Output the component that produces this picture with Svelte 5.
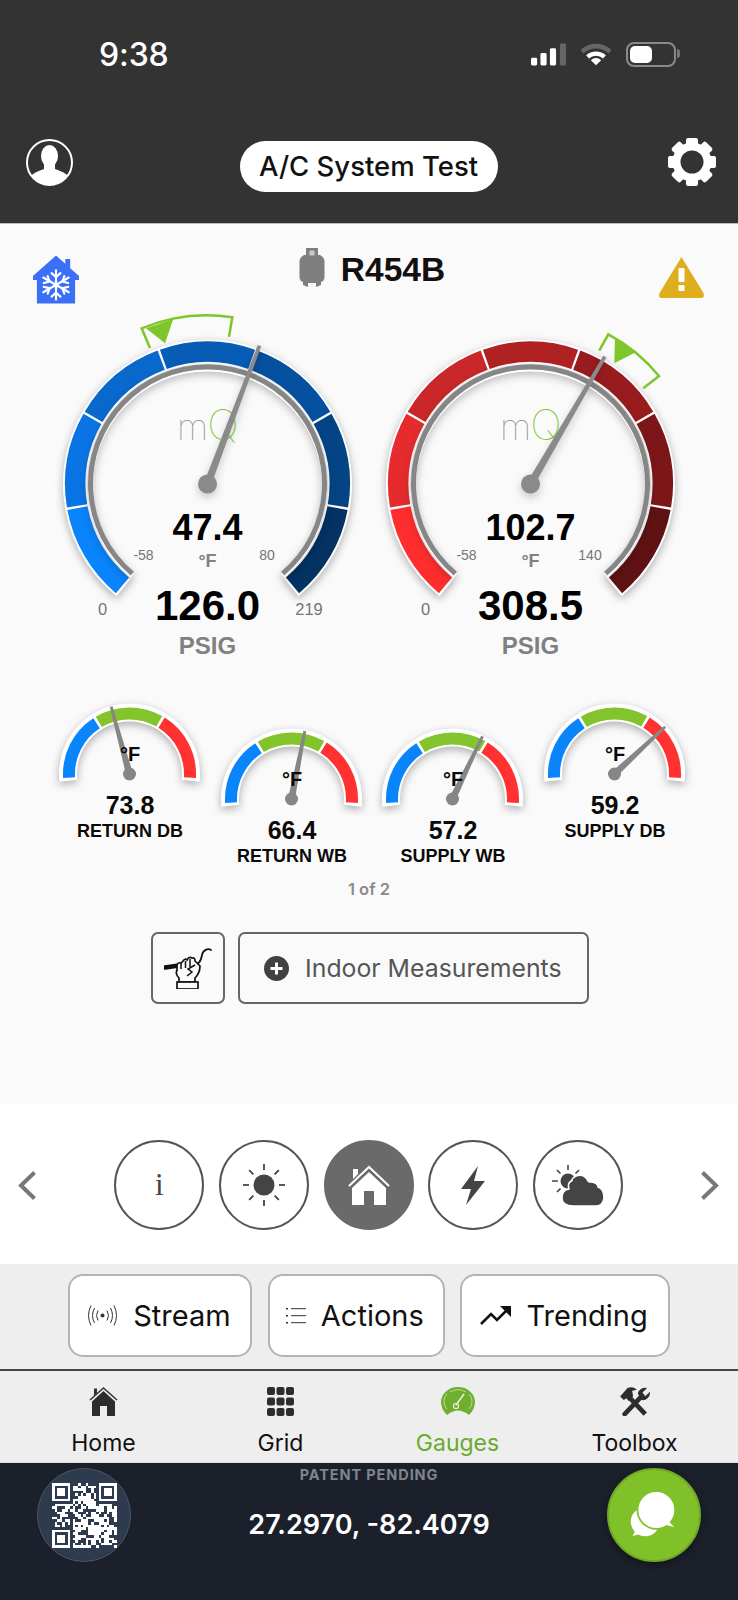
<script>
  const pt = (cx, cy, r, a) => [cx + r * Math.cos((a * Math.PI) / 180), cy - r * Math.sin((a * Math.PI) / 180)];
  const f = (n) => n.toFixed(2);
  function sector(cx, cy, r0, r1, a0, a1) {
    const [x1, y1] = pt(cx, cy, r1, a0);
    const [x2, y2] = pt(cx, cy, r1, a1);
    const [x3, y3] = pt(cx, cy, r0, a1);
    const [x4, y4] = pt(cx, cy, r0, a0);
    const large = Math.abs(a0 - a1) > 180 ? 1 : 0;
    return `M${f(x1)} ${f(y1)}A${r1} ${r1} 0 ${large} 1 ${f(x2)} ${f(y2)}L${f(x3)} ${f(y3)}A${r0} ${r0} 0 ${large} 0 ${f(x4)} ${f(y4)}Z`;
  }
  function needle(cx, cy, dx, dy, base, tip) {
    const l = Math.hypot(dx, dy);
    const nx = -dy / l;
    const ny = dx / l;
    const p = [
      [cx + nx * base, cy + ny * base],
      [cx + dx + nx * tip, cy + dy + ny * tip],
      [cx + dx - nx * tip, cy + dy - ny * tip],
      [cx - nx * base, cy - ny * base]
    ];
    return p.map((q) => q.map(f).join(',')).join(' ');
  }
  const CX = 161.5;
  const CY = 180;
  const blues = ['#0a84fb', '#0a74e4', '#0868cc', '#075cb6', '#06519f', '#054484', '#033263'];
  const reds = ['#ff2e2e', '#e52b2d', '#c92729', '#b02122', '#981c1e', '#7c1719', '#5e1213'];
  const big = [
    { colors: blues, val: '47.4', lo: '-58', hi: '80', max: '219', main: '126.0', tip: [52, -138.3],
      bracket: 'M104,44 L95.700,24.300 A169 169 0 0 1 186.300,13.300 L183,32.700', tri: '100,24.300 127.300,15 119,39.300' },
    { colors: reds, val: '102.7', lo: '-58', hi: '140', max: null, main: '308.5', tip: [74.3, -127.3],
      bracket: 'M230.300,46.700 L239.300,30.300 A167 167 0 0 1 290,72 L274.300,84.300', tri: '246,34.300 267.700,47.700 245.300,59.300' }
  ];
  const small = [
    { val: '73.8', label: 'RETURN DB', tip: [-18.3, -67.3], low: false },
    { val: '66.4', label: 'RETURN WB', tip: [13.3, -68], low: true },
    { val: '57.2', label: 'SUPPLY WB', tip: [30, -62.7], low: true },
    { val: '59.2', label: 'SUPPLY DB', tip: [50.7, -47.3], low: false }
  ];
  const SX = 81.5;
  const SY = 79;
  const gearTeeth = [0, 45, 90, 135, 180, 225, 270, 315];
  const sunRays = [0, 45, 90, 135, 180, 225, 270, 315];
  const N = 25;
  const qr = [];
  let seed = 1337;
  const rnd = () => ((seed = (seed * 1103515245 + 12345) & 0x7fffffff) >> 12) % 100;
  const inFinder = (x, y) => (x < 8 && y < 8) || (x > 16 && y < 8) || (x < 8 && y > 16);
  for (let y = 0; y < N; y++) for (let x = 0; x < N; x++) if (!inFinder(x, y) && rnd() < 55) qr.push([x, y]);
  const finders = [[0, 0], [18, 0], [0, 18]];
</script>

<div class="app">
  <header class="head">
    <div class="status">
      <span class="time">9:38</span>
      <div class="sicons">
        <svg width="35" height="23" viewBox="0 0 37 23" aria-hidden="true">
          <rect x="0" y="15" width="6.5" height="8" rx="1.5" fill="#fff" />
          <rect x="10" y="10" width="6.5" height="13" rx="1.5" fill="#fff" />
          <rect x="20" y="5" width="6.5" height="18" rx="1.5" fill="#fff" />
          <rect x="30.5" y="0" width="6.5" height="23" rx="1.5" fill="#666" />
        </svg>
        <svg width="30" height="23" viewBox="0 0 32 23" aria-hidden="true">
          <path d="M1 8.5A22 22 0 0 1 31 8.5" fill="none" stroke="#666" stroke-width="5" />
          <path d="M7 14A13.500 13.500 0 0 1 25 14" fill="none" stroke="#fff" stroke-width="4.500" />
          <path d="M16 23L10.500 17.500A8 8 0 0 1 21.500 17.500Z" fill="#fff" />
        </svg>
        <div class="batt"><span class="cell"></span><span class="nub"></span></div>
      </div>
    </div>
    <div class="titlerow">
      <svg width="47" height="47" viewBox="0 0 47 47" aria-hidden="true">
        <defs><clipPath id="avc"><circle cx="23.5" cy="23.5" r="22.500" /></clipPath></defs>
        <g clip-path="url(#avc)" fill="#fff">
          <ellipse cx="23.5" cy="17" rx="8.500" ry="11" />
          <path d="M18 25L18 30Q8 33 4 38L4 48L43 48L43 38Q39 33 29 30L29 25Z" />
        </g>
        <circle cx="23.5" cy="23.5" r="22.500" fill="none" stroke="#fff" stroke-width="2" />
      </svg>
      <div class="pill">A/C System Test</div>
      <svg width="48" height="48" viewBox="0 0 48 48" aria-hidden="true">
        {#each gearTeeth as a}
          <rect x="18" y="0" width="12" height="12" rx="2" fill="#fff" transform="rotate({a} 24 24)" />
        {/each}
        <circle cx="24" cy="24" r="15.500" fill="none" stroke="#fff" stroke-width="8" />
      </svg>
    </div>
  </header>

  <main class="content">
    <div class="toprow">
      <svg class="hv" width="46" height="49" viewBox="0 0 47 49" aria-hidden="true">
        <path d="M23.500 0L33 8.500V3.500H38V13L47 21V25H43V49H4V25H0V21Z" fill="#3b6ff5" />
        <g stroke="#fff" stroke-width="2.200" stroke-linecap="round" fill="none">
          <path d="M23.500 15V45M10.500 22.500L36.500 37.500M36.500 22.500L10.500 37.500" />
          <path d="M19 18L23.500 22L28 18M19 42L23.500 38L28 42M11 28L17 26.500L15 21M36 28L30 26.500L32 21M11 32L17 33.500L15 39M36 32L30 33.500L32 39" />
        </g>
      </svg>
      <div class="refrig">
        <svg width="26" height="39" viewBox="0 0 26 39" aria-hidden="true">
          <path d="M7 0H19V7H21Q25 9 25.500 13V30Q25 33 22 34V37L17 39V35H9V39L4 37V34Q1 33 .5 30V13Q1 9 5 7H7Z" fill="#7f7f7f" />
          <rect x="10.500" y="2.500" width="5" height="5" fill="#fafafa" opacity=".6" />
        </svg>
        <span class="rname">R454B</span>
      </div>
      <svg class="warn" width="47" height="43" viewBox="0 0 47 43" aria-hidden="true">
        <path d="M23.500 2L45.500 38Q47 43 43 43H4Q0 43 1.500 38Z" fill="#dfae1f" />
        <rect x="20.500" y="13" width="6" height="14" rx="1" fill="#fff" />
        <rect x="20.500" y="30" width="6" height="6" rx="1" fill="#fff" />
      </svg>
    </div>

    <div class="bigrow">
      {#each big as g}
        <svg class="bg" width="323" height="365" viewBox="0 0 323 365">
          <g class="shadow">
            <path d={sector(CX, CY, 120, 144.500, 231, -51)} fill="#fff" />
          </g>
          {#each g.colors as c, i}
            <path d={sector(CX, CY, 122, 142.500, 230 - 40 * i - (i ? 0.5 : 0), 230 - 40 * (i + 1) + (i < 6 ? 0.5 : 0))} fill={c} />
          {/each}
          <g class="shadow2">
            <path d={sector(CX, CY, 114.500, 119.500, 230, -50)} fill="#868686" />
          </g>
          <path d={g.bracket} fill="none" stroke="#7fc62c" stroke-width="2.500" />
          <polygon points={g.tri} fill="#7fc62c" />
          <text class="mq" x={CX - 30.500} y="136"><tspan class="m">m</tspan><tspan class="q" dx="-1">Q</tspan></text>
          <text class="num" x={CX} y="236" font-size="36">{g.val}</text>
          <text class="unit" x={CX} y="263" font-size="18">°F</text>
          <text class="tick" x={CX - 64} y="256" font-size="14">{g.lo}</text>
          <text class="tick" x={CX + 59.500} y="256" font-size="14">{g.hi}</text>
          <text class="tick" x={CX - 105} y="311" font-size="16.500">0</text>
          {#if g.max}<text class="tick" x={CX + 101.500} y="311" font-size="16.500">{g.max}</text>{/if}
          <text class="num" x={CX} y="316" font-size="42">{g.main}</text>
          <text class="unit" x={CX} y="350" font-size="24">PSIG</text>
          <g class="shadow3">
            <polygon points={needle(CX, CY, g.tip[0], g.tip[1], 3.800, 1.800)} fill="#8a8a8a" />
            <circle cx={CX} cy={CY} r="9.500" fill="#8a8a8a" />
          </g>
        </svg>
      {/each}
    </div>

    <div class="smallrow">
      {#each small as s}
        <svg class="sg" class:low={s.low} width="161.700" height="150" viewBox="0 0 161.700 150">
          <g class="shadow">
            <path d={sector(SX, SY, 52.500, 70.500, 186.400, -6.400)} fill="#fff" />
          </g>
          <path d={sector(SX, SY, 54.500, 66.500, 183.500, 123)} fill="#0a84fb" />
          <path d={sector(SX, SY, 54.500, 66.500, 120.500, 60.500)} fill="#83c42d" />
          <path d={sector(SX, SY, 54.500, 66.500, 58, -3.500)} fill="#ff3131" />
          <polygon points={needle(SX, SY, s.tip[0], s.tip[1], 3.500, 1.400)} fill="#868686" />
          <circle cx={SX} cy={SY} r="6.500" fill="#868686" />
          <text class="sf" x={SX + 0.5} y="66" font-size="20">°F</text>
          <text class="sv" x={SX + 0.5} y="119" font-size="25">{s.val}</text>
          <text class="sl" x={SX + 0.5} y="142.500" font-size="18">{s.label}</text>
        </svg>
      {/each}
    </div>

    <div class="pager">1 of 2</div>

    <div class="actions">
      <button class="sq" aria-label="Probe">
        <svg width="48" height="42" viewBox="0 0 48 42" aria-hidden="true">
          <path d="M1 20.500L15 18.500" stroke="#111" stroke-width="4.500" stroke-linecap="round" />
          <path d="M28 15C34 20 37 14 38 8C39 3 44 1 47 3" fill="none" stroke="#111" stroke-width="1.700" stroke-linecap="round" />
          <g fill="#fafafa" stroke="#111" stroke-width="1.700">
            <path d="M13 23V18Q14 15 17 16L19 14Q21 11 23 13Q25 9 28 11Q31 10 31 14L36 19Q36 26 31 31V35H15V31Q11 27 13 23Z" />
            <rect x="13" y="35" width="21" height="7" />
          </g>
          <path d="M17 16V22M21.500 14V21M26 12V20M31 18L24 22L28 25L23 29" fill="none" stroke="#111" stroke-width="1.500" />
        </svg>
      </button>
      <button class="wide">
        <svg width="25" height="25" viewBox="0 0 25 25" aria-hidden="true">
          <circle cx="12.500" cy="12.500" r="12.500" fill="#414141" />
          <path d="M12.500 6.500V18.500M6.500 12.500H18.500" stroke="#fff" stroke-width="3" />
        </svg>
        <span>Indoor Measurements</span>
      </button>
    </div>
  </main>

  <section class="tabs">
    <svg width="19" height="29" viewBox="0 0 19 29" aria-hidden="true"><path d="M16.500 1.500L3 14.500L16.500 27.500" fill="none" stroke="#777" stroke-width="4" /></svg>
    <div class="circles">
      <div class="circ"><span class="ii">i</span></div>
      <div class="circ">
        <svg width="50" height="44" viewBox="0 0 50 44" aria-hidden="true">
          <circle cx="25" cy="22" r="10.500" fill="#444" />
          {#each sunRays as a}
            <line x1="25" y1="1" x2="25" y2="7" stroke="#444" stroke-width="1.800" transform="rotate({a} 25 22)" />
          {/each}
        </svg>
      </div>
      <div class="circ on">
        <svg width="42" height="40" viewBox="0 0 42 40" aria-hidden="true">
          <path d="M1 21L21 2L41 21" fill="none" stroke="#fff" stroke-width="2" />
          <path d="M5 4H10V9L5 14Z" fill="#fff" />
          <path d="M4 23L21 7L38 23V40H26V26H16V40H4Z" fill="#fff" />
        </svg>
      </div>
      <div class="circ">
        <svg width="24" height="39" viewBox="0 0 24 39" aria-hidden="true"><path d="M17 0L0 23H10L5 39L24 15H13Z" fill="#444" /></svg>
      </div>
      <div class="circ">
        <svg width="52" height="41" viewBox="0 0 52 41" aria-hidden="true">
          <circle cx="16" cy="16" r="7.500" fill="#444" />
          <g stroke="#444" stroke-width="1.600">
            <path d="M16 0V5M0 16H6M5 5L8.500 8.500M27 5L23.500 8.500M5 27L8.500 23.500" />
          </g>
          <path d="M17 24Q15 18 20 15.500Q19 14 24 11Q32 8 36 16Q36 17 39 17Q46 18 46 22Q52 24 52 33Q51 41 43 41H21Q10 41 10 33Q10 25 17 24Z" fill="#444" stroke="#fff" stroke-width="1.500" />
        </svg>
      </div>
    </div>
    <svg width="19" height="29" viewBox="0 0 19 29" aria-hidden="true"><path d="M2.500 1.500L16 14.500L2.500 27.500" fill="none" stroke="#777" stroke-width="4" /></svg>
  </section>

  <section class="btnbar">
    <button class="b stream">
      <svg width="31" height="21" viewBox="0 0 31 21" aria-hidden="true">
        <circle cx="15.500" cy="10.500" r="2" fill="#333" />
        <g fill="none" stroke="#333" stroke-width="1">
          <path d="M11 5.500Q8 10.500 11 15.500M20 5.500Q23 10.500 20 15.500M7.500 3Q3.500 10.500 7.500 18M23.500 3Q27.500 10.500 23.500 18M4 .5Q-1 10.500 4 20.500M27 .5Q32 10.500 27 20.500" />
        </g>
      </svg>
      <span>Stream</span>
    </button>
    <button class="b actionsb">
      <svg width="20" height="18" viewBox="0 0 20 18" aria-hidden="true">
        <g fill="#333"><rect x="0" y="1" width="2" height="1.500" /><rect x="0" y="8" width="2" height="1.500" /><rect x="0" y="15" width="2" height="1.500" /></g>
        <path d="M5 1.700H20M5 8.700H20M5 15.700H20" stroke="#333" stroke-width="1" />
      </svg>
      <span>Actions</span>
    </button>
    <button class="b trendb">
      <svg width="31" height="19" viewBox="0 0 31 19" aria-hidden="true">
        <path d="M1 18L11 8L17 14L29 2" fill="none" stroke="#111" stroke-width="2.600" />
        <path d="M20 0H31V11Z" fill="#111" />
      </svg>
      <span>Trending</span>
    </button>
  </section>

  <nav class="nav">
    <div class="ni">
      <svg width="29" height="29" viewBox="0 0 29 29" aria-hidden="true">
        <path d="M1 13L14.500 1L28 13" fill="none" stroke="#333" stroke-width="1.500" />
        <path d="M5 1.500H8V6L5 9Z" fill="#333" />
        <path d="M3 14.500L14.500 4L26 14.500V29H18V19H11V29H3Z" fill="#2d2d2d" />
      </svg>
      <span>Home</span>
    </div>
    <div class="ni">
      <svg width="27" height="29" viewBox="0 0 27 29" aria-hidden="true">
        {#each [0, 10.500, 21] as y}
          {#each [0, 9.500, 19] as x}
            <rect x={x} y={y} width="8" height="8" rx="2" fill="#2d2d2d" />
          {/each}
        {/each}
      </svg>
      <span>Grid</span>
    </div>
    <div class="ni act">
      <svg width="34" height="29" viewBox="0 0 34 29" aria-hidden="true">
        <path d="M6 28Q0 22 0 15A17 15 0 0 1 34 15Q34 22 28 28Q17 19 6 28Z" fill="#6fae2e" />
        <path d="M6 22A14 12 0 0 1 6 7M28 22A14 12 0 0 0 28 7M9 5A14 13 0 0 1 25 5" fill="none" stroke="#cfe6b4" stroke-width=".8" />
        <path d="M15 18L23 7" stroke="#eaf4dd" stroke-width="1.500" />
        <circle cx="15" cy="19" r="2.500" fill="none" stroke="#eaf4dd" stroke-width="1.200" />
      </svg>
      <span>Gauges</span>
    </div>
    <div class="ni">
      <svg width="35" height="29" viewBox="0 0 35 31" class="tb" aria-hidden="true">
        <path d="M7 29L25 10" stroke="#2d2d2d" stroke-width="5" stroke-linecap="round" />
        <path d="M21 7A8 8 0 0 1 31 1L26 6L29 10L34 5A8 8 0 0 1 25 14Z" fill="#2d2d2d" />
        <path d="M29 29L12 11" stroke="#2d2d2d" stroke-width="5" />
        <path d="M4 8L10 1Q16 -1 20 3L15 4L16 10L11 15L9 12L6 14L2 10Z" fill="#2d2d2d" />
      </svg>
      <span>Toolbox</span>
    </div>
  </nav>

  <footer class="foot">
    <div class="qrb">
      <svg width="65" height="65" viewBox="0 0 25 25" shape-rendering="crispEdges" aria-hidden="true">
        {#each qr as m}<rect x={m[0]} y={m[1]} width="1" height="1" fill="#fff" />{/each}
        {#each finders as p}
          <path d="M{p[0]} {p[1]}h7v7h-7zM{p[0] + 1} {p[1] + 1}v5h5v-5z" fill="#fff" fill-rule="evenodd" />
          <rect x={p[0] + 2} y={p[1] + 2} width="3" height="3" fill="#fff" />
        {/each}
      </svg>
    </div>
    <div class="mid">
      <div class="pat">PATENT PENDING</div>
      <div class="coord">27.2970, -82.4079</div>
    </div>
    <div class="chat">
      <svg width="60" height="50" viewBox="0 0 60 50" aria-hidden="true">
        <circle cx="21.300" cy="31.700" r="14.500" fill="#fff" />
        <path d="M13 38L8.500 46L20 43Z" fill="#fff" />
        <circle cx="32.300" cy="20" r="19.800" fill="#80c029" />
        <circle cx="32.300" cy="20" r="18" fill="#fff" />
        <path d="M42 28L50 37L38 34Z" fill="#fff" />
      </svg>
    </div>
  </footer>
</div>

<style>
  :global(body) { margin: 0; background: #fafafa; }
  .app { width: 738px; height: 1600px; display: flex; flex-direction: column; overflow: hidden; font-family: Inter, "Liberation Sans", sans-serif; }
  .head { height: 224px; background: #333; flex: none; box-sizing: border-box; border-bottom: 1px solid #bbb; }
  .status { height: 109px; display: flex; align-items: center; justify-content: space-between; padding: 0 62px 0 99px; }
  .time { color: #fff; font-size: 32px; font-weight: 500; letter-spacing: -.1px; }
  .sicons { display: flex; align-items: center; gap: 15px; }
  .batt { width: 42px; height: 17px; border: 2px solid #8a8a8a; border-radius: 8px; position: relative; padding: 2px; box-sizing: content-box; display: flex; }
  .cell { width: 22px; background: #fff; border-radius: 5px; }
  .nub { position: absolute; right: -6px; top: 5px; width: 3px; height: 9px; background: #777; border-radius: 0 3px 3px 0; }
  .titlerow { margin-top: 29px; height: 48px; display: flex; align-items: center; justify-content: space-between; padding: 0 22px 0 26px; }
  .pill { margin-top: 8px; margin-right: 4px; width: 258px; height: 51px; border-radius: 26px; background: #fff; color: #111; display: flex; align-items: center; justify-content: center; font-size: 27.500px; font-weight: 500; }
  .content { height: 880px; flex: none; background: #fafafa; box-sizing: border-box; padding-top: 24px; }
  .toprow { height: 56px; display: flex; justify-content: space-between; align-items: flex-start; padding: 0 33px 0 33px; }
  .hv, .warn { margin-top: 7px; }
  .refrig { margin-left: 7px; display: flex; gap: 16px; align-items: center; font: 700 33.500px "Liberation Sans", sans-serif; color: #111; height: 39px; }
  .rname { padding-top: 4px; }
  .bigrow { display: flex; padding-left: 46px; height: 365px; }
  svg { display: block; flex: none; }
  .bg text { font-family: "Liberation Sans", sans-serif; text-anchor: middle; }
  .bg .num { font-weight: 700; fill: #000; }
  .bg .unit { font-weight: 700; fill: #808080; }
  .bg .tick { fill: #757575; }
  .bg .mq { font-family: Inter, sans-serif; font-weight: 100; text-anchor: start; }
  .bg .m { fill: #8c8c8c; font-size: 36px; }
  .bg .q { fill: #7fc62c; font-size: 42px; }
  .shadow { filter: drop-shadow(0 3px 4px rgba(0,0,0,.3)); }
  .shadow2 { filter: drop-shadow(0 2px 0 #fff) drop-shadow(0 3px 4px rgba(0,0,0,.25)); }
  .shadow3 { filter: drop-shadow(0 4px 4px rgba(0,0,0,.2)); }
  .smallrow { margin-top: 26px; height: 175px; display: flex; padding-left: 48px; align-items: flex-start; }
  .sg text { font-family: "Liberation Sans", sans-serif; font-weight: 700; text-anchor: middle; fill: #0a0a0a; }
  .low { margin-top: 24.7px; }
  .pager { margin-top: 9px; height: 20px; line-height: 20px; text-align: center; font-size: 16.500px; font-weight: 600; color: #8a8a8a; }
  .actions { margin-top: 33px; margin-left: 150.7px; display: flex; gap: 13.4px; height: 72px; }
  button { font-family: inherit; cursor: pointer; margin: 0; }
  .sq, .wide { box-sizing: border-box; height: 72px; background: transparent; border: 2px solid #666; border-radius: 7px; display: flex; align-items: center; padding: 0; }
  .sq { width: 74px; justify-content: center; }
  .wide { width: 351px; padding-left: 24px; gap: 16px; font-size: 24.800px; color: #555; }
  .tabs { height: 160px; flex: none; background: #fff; display: flex; align-items: center; justify-content: space-between; padding: 2px 19px 0 18px; box-sizing: border-box; }
  .circles { display: flex; gap: 14.6px; }
  .circ { box-sizing: border-box; width: 90px; height: 90px; border-radius: 50%; border: 2px solid #555; display: flex; align-items: center; justify-content: center; background: #fff; }
  .on { background: #6a6a6a; border-color: #6a6a6a; }
  .ii { font-family: "Liberation Serif", serif; font-size: 31px; color: #444; }
  .btnbar { height: 105px; flex: none; box-sizing: border-box; background: #eee; padding: 10px 0 0 68.4px; display: flex; gap: 15.4px; }
  .b { box-sizing: border-box; height: 83px; background: #fff; border: 2px solid #b4b4b4; border-radius: 15px; display: flex; align-items: center; justify-content: center; color: #111; font-size: 29px; padding: 0 3px 0 0; }
  .stream { width: 184px; gap: 15px; }
  .actionsb { width: 177px; gap: 15px; }
  .trendb { width: 210px; gap: 16px; }
  .nav { height: 93px; flex: none; box-sizing: border-box; background: #eee; border-top: 2px solid #444; display: grid; grid-template-columns: repeat(4, 177px); padding: 16px 15px 0; }
  .ni { display: flex; flex-direction: column; align-items: center; color: #111; font-size: 23px; gap: 13px; }
  .act { color: #6aaa2c; }
  .foot { flex: 1; background: #1b202b; display: flex; align-items: flex-start; padding: 6px 37px 0; box-shadow: inset 0 1px 0 #ddd; }
  .qrb { width: 94px; height: 94px; box-sizing: border-box; border-radius: 50%; background: #2e3b4e; border: 1.500px solid #4a5567; display: flex; align-items: center; justify-content: center; flex: none; }
  .mid { flex: 1; text-align: center; }
  .pat { color: #80848c; font-size: 14.500px; font-weight: 700; line-height: 18px; letter-spacing: .9px; margin-top: -2px; }
  .coord { color: #fff; font-size: 27px; font-weight: 600; line-height: 30px; margin-top: 26px; }
  .chat { width: 94px; height: 94px; box-sizing: border-box; border-radius: 50%; background: #80c029; border: 2px solid #6ea825; display: flex; align-items: center; justify-content: center; flex: none; box-shadow: 0 2px 8px rgba(0,0,0,.4); }
</style>
